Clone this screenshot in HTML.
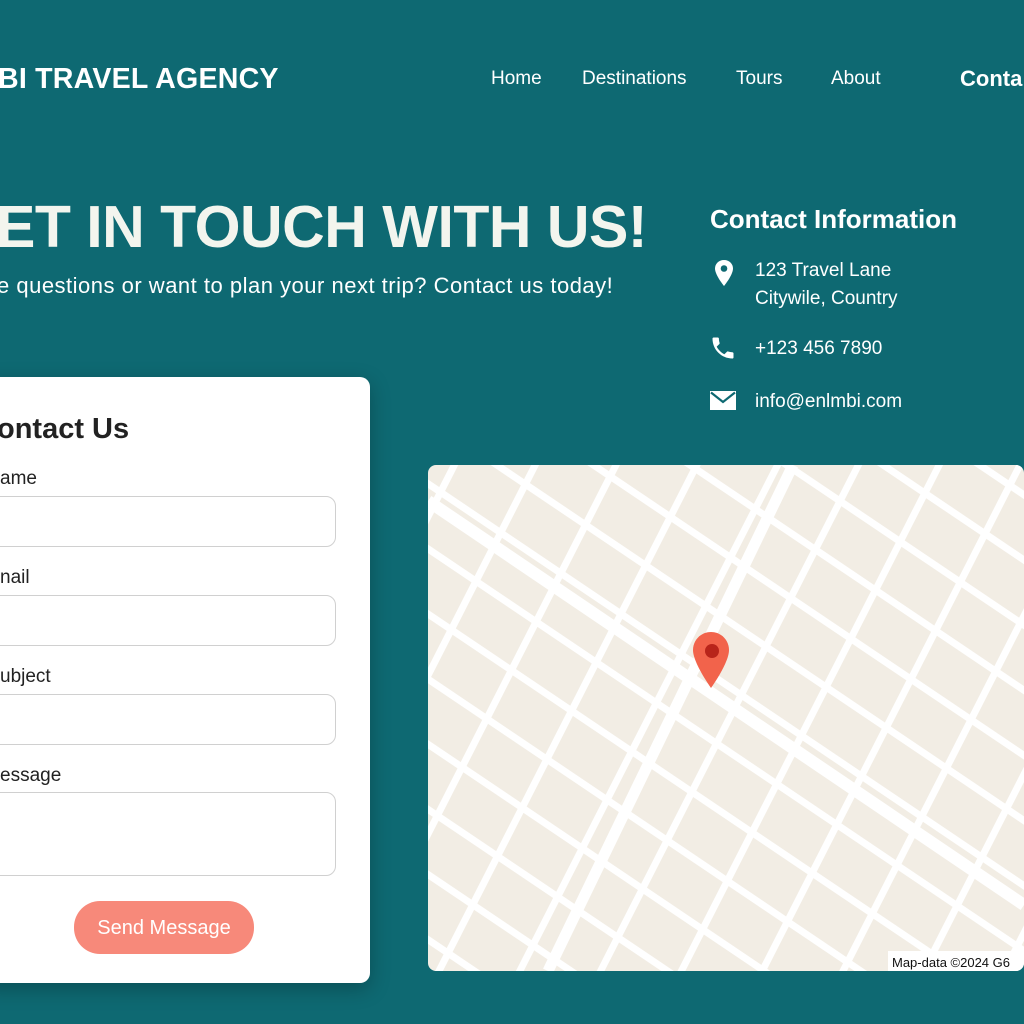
<!DOCTYPE html>
<html><head><meta charset="utf-8"><style>
*{margin:0;padding:0;box-sizing:border-box}
body{width:1024px;height:1024px;overflow:hidden;background:#0e6972;font-family:"Liberation Sans",sans-serif;position:relative;color:#fff}
.a{position:absolute;white-space:nowrap}
.nav{font-size:19px;top:68px}
.lab{position:absolute;left:-2px;font-size:19px;color:#222}
.in{position:absolute;left:-10px;width:345px;border:1.5px solid #d0d0d0;border-radius:10px;background:#fff}
.ci{font-size:19px;left:755px}
</style></head><body>
<div class="a" style="left:-2px;top:63px;font-size:28.6px;font-weight:bold;letter-spacing:0.2px">BI TRAVEL AGENCY</div>
<div class="a nav" style="left:491px">Home</div>
<div class="a nav" style="left:582px">Destinations</div>
<div class="a nav" style="left:736px">Tours</div>
<div class="a nav" style="left:831px">About</div>
<div class="a" style="left:960px;top:66px;font-size:22px;font-weight:bold">Conta</div>

<div class="a" style="left:-4px;top:193px;font-size:59px;font-weight:bold;color:#f3f5ee;letter-spacing:-0.5px">ET IN TOUCH WITH US!</div>
<div class="a" style="left:-3px;top:273px;font-size:22px;letter-spacing:0.5px">e questions or want to plan your next trip? Contact us today!</div>

<div class="a" style="left:710px;top:204px;font-size:26px;font-weight:bold">Contact Information</div>
<svg class="a" style="left:713px;top:259px" width="22" height="28" viewBox="0 0 22 28"><path d="M11 1C5.5 1 2 5 2 9.5 2 16 11 27 11 27S20 16 20 9.5C20 5 16.5 1 11 1Z" fill="#fff"/><circle cx="11" cy="9.5" r="3.3" fill="#0e6972"/></svg>
<div class="a ci" style="top:260px">123 Travel Lane</div>
<div class="a ci" style="top:288px">Citywile, Country</div>
<svg class="a" style="left:709px;top:334px" width="28" height="28" viewBox="0 0 24 24"><path d="M6.6 10.8c1.4 2.8 3.8 5.1 6.6 6.6l2.2-2.2c.3-.3.7-.4 1-.2 1.1.4 2.3.6 3.6.6.6 0 1 .4 1 1V20c0 .6-.4 1-1 1C10.6 21 3 13.4 3 4c0-.6.4-1 1-1h3.5c.6 0 1 .4 1 1 0 1.3.2 2.5.6 3.6.1.3 0 .7-.2 1l-2.3 2.2z" fill="#fff"/></svg>
<div class="a ci" style="top:338px">+123 456 7890</div>
<svg class="a" style="left:710px;top:391px" width="26" height="19" viewBox="0 0 26 19"><rect x="0" y="0" width="26" height="19" fill="#fff"/><path d="M1 1.5L13 11 25 1.5" stroke="#0e6972" stroke-width="2.2" fill="none"/></svg>
<div class="a ci" style="top:391px">info@enlmbi.com</div>

<div class="a" style="left:-20px;top:377px;width:390px;height:606px;background:#fff;border-radius:10px;box-shadow:0 6px 20px rgba(0,0,0,.25)">
 <div class="a" style="left:17px;top:36px;font-size:29px;font-weight:bold;color:#222">ontact Us</div>
 <div class="lab" style="left:20px;top:91px">ame</div>
 <div class="in" style="left:0;top:119px;width:356px;height:51px"></div>
 <div class="lab" style="left:20px;top:190px">nail</div>
 <div class="in" style="left:0;top:218px;width:356px;height:51px"></div>
 <div class="lab" style="left:20px;top:289px">ubject</div>
 <div class="in" style="left:0;top:317px;width:356px;height:51px"></div>
 <div class="lab" style="left:20px;top:388px">essage</div>
 <div class="in" style="left:0;top:415px;width:356px;height:84px"></div>
 <div class="a" style="left:94px;top:524px;width:180px;height:53px;border-radius:26px;background:#f7897a;font-size:20px;text-align:center;line-height:55px;color:#fff">Send Message</div>
</div>

<svg class="a" style="left:428px;top:465px;border-radius:8px" width="596" height="506" viewBox="0 0 596 506">
<defs>
<pattern id="pa" width="600" height="54" patternUnits="userSpaceOnUse" patternTransform="rotate(34) translate(0,12)"><rect width="600" height="7" fill="#fff"/></pattern>
<pattern id="pb" width="72" height="600" patternUnits="userSpaceOnUse" patternTransform="rotate(27) translate(20,0)"><rect width="7" height="600" fill="#fff"/></pattern>
</defs>
<rect width="596" height="506" fill="#f2ede4"/>
<rect width="596" height="506" fill="url(#pa)"/>
<rect width="596" height="506" fill="url(#pb)"/>
<path d="M0 36 L596 440" stroke="#fff" stroke-width="12"/>
<path d="M365 0 L120 506" stroke="#fff" stroke-width="11"/>
<path d="M283 167c-10 0-18 8-18 18 0 13 18 38 18 38s18-25 18-38c0-10-8-18-18-18z" fill="#f2634b"/>
<circle cx="284" cy="186" r="7" fill="#b8241a"/>
<rect x="460" y="486" width="136" height="20" fill="#fff"/>
<text x="464" y="502" font-family="Liberation Sans" font-size="13" fill="#111">Map-data ©2024 G6</text>
</svg>
</body></html>
